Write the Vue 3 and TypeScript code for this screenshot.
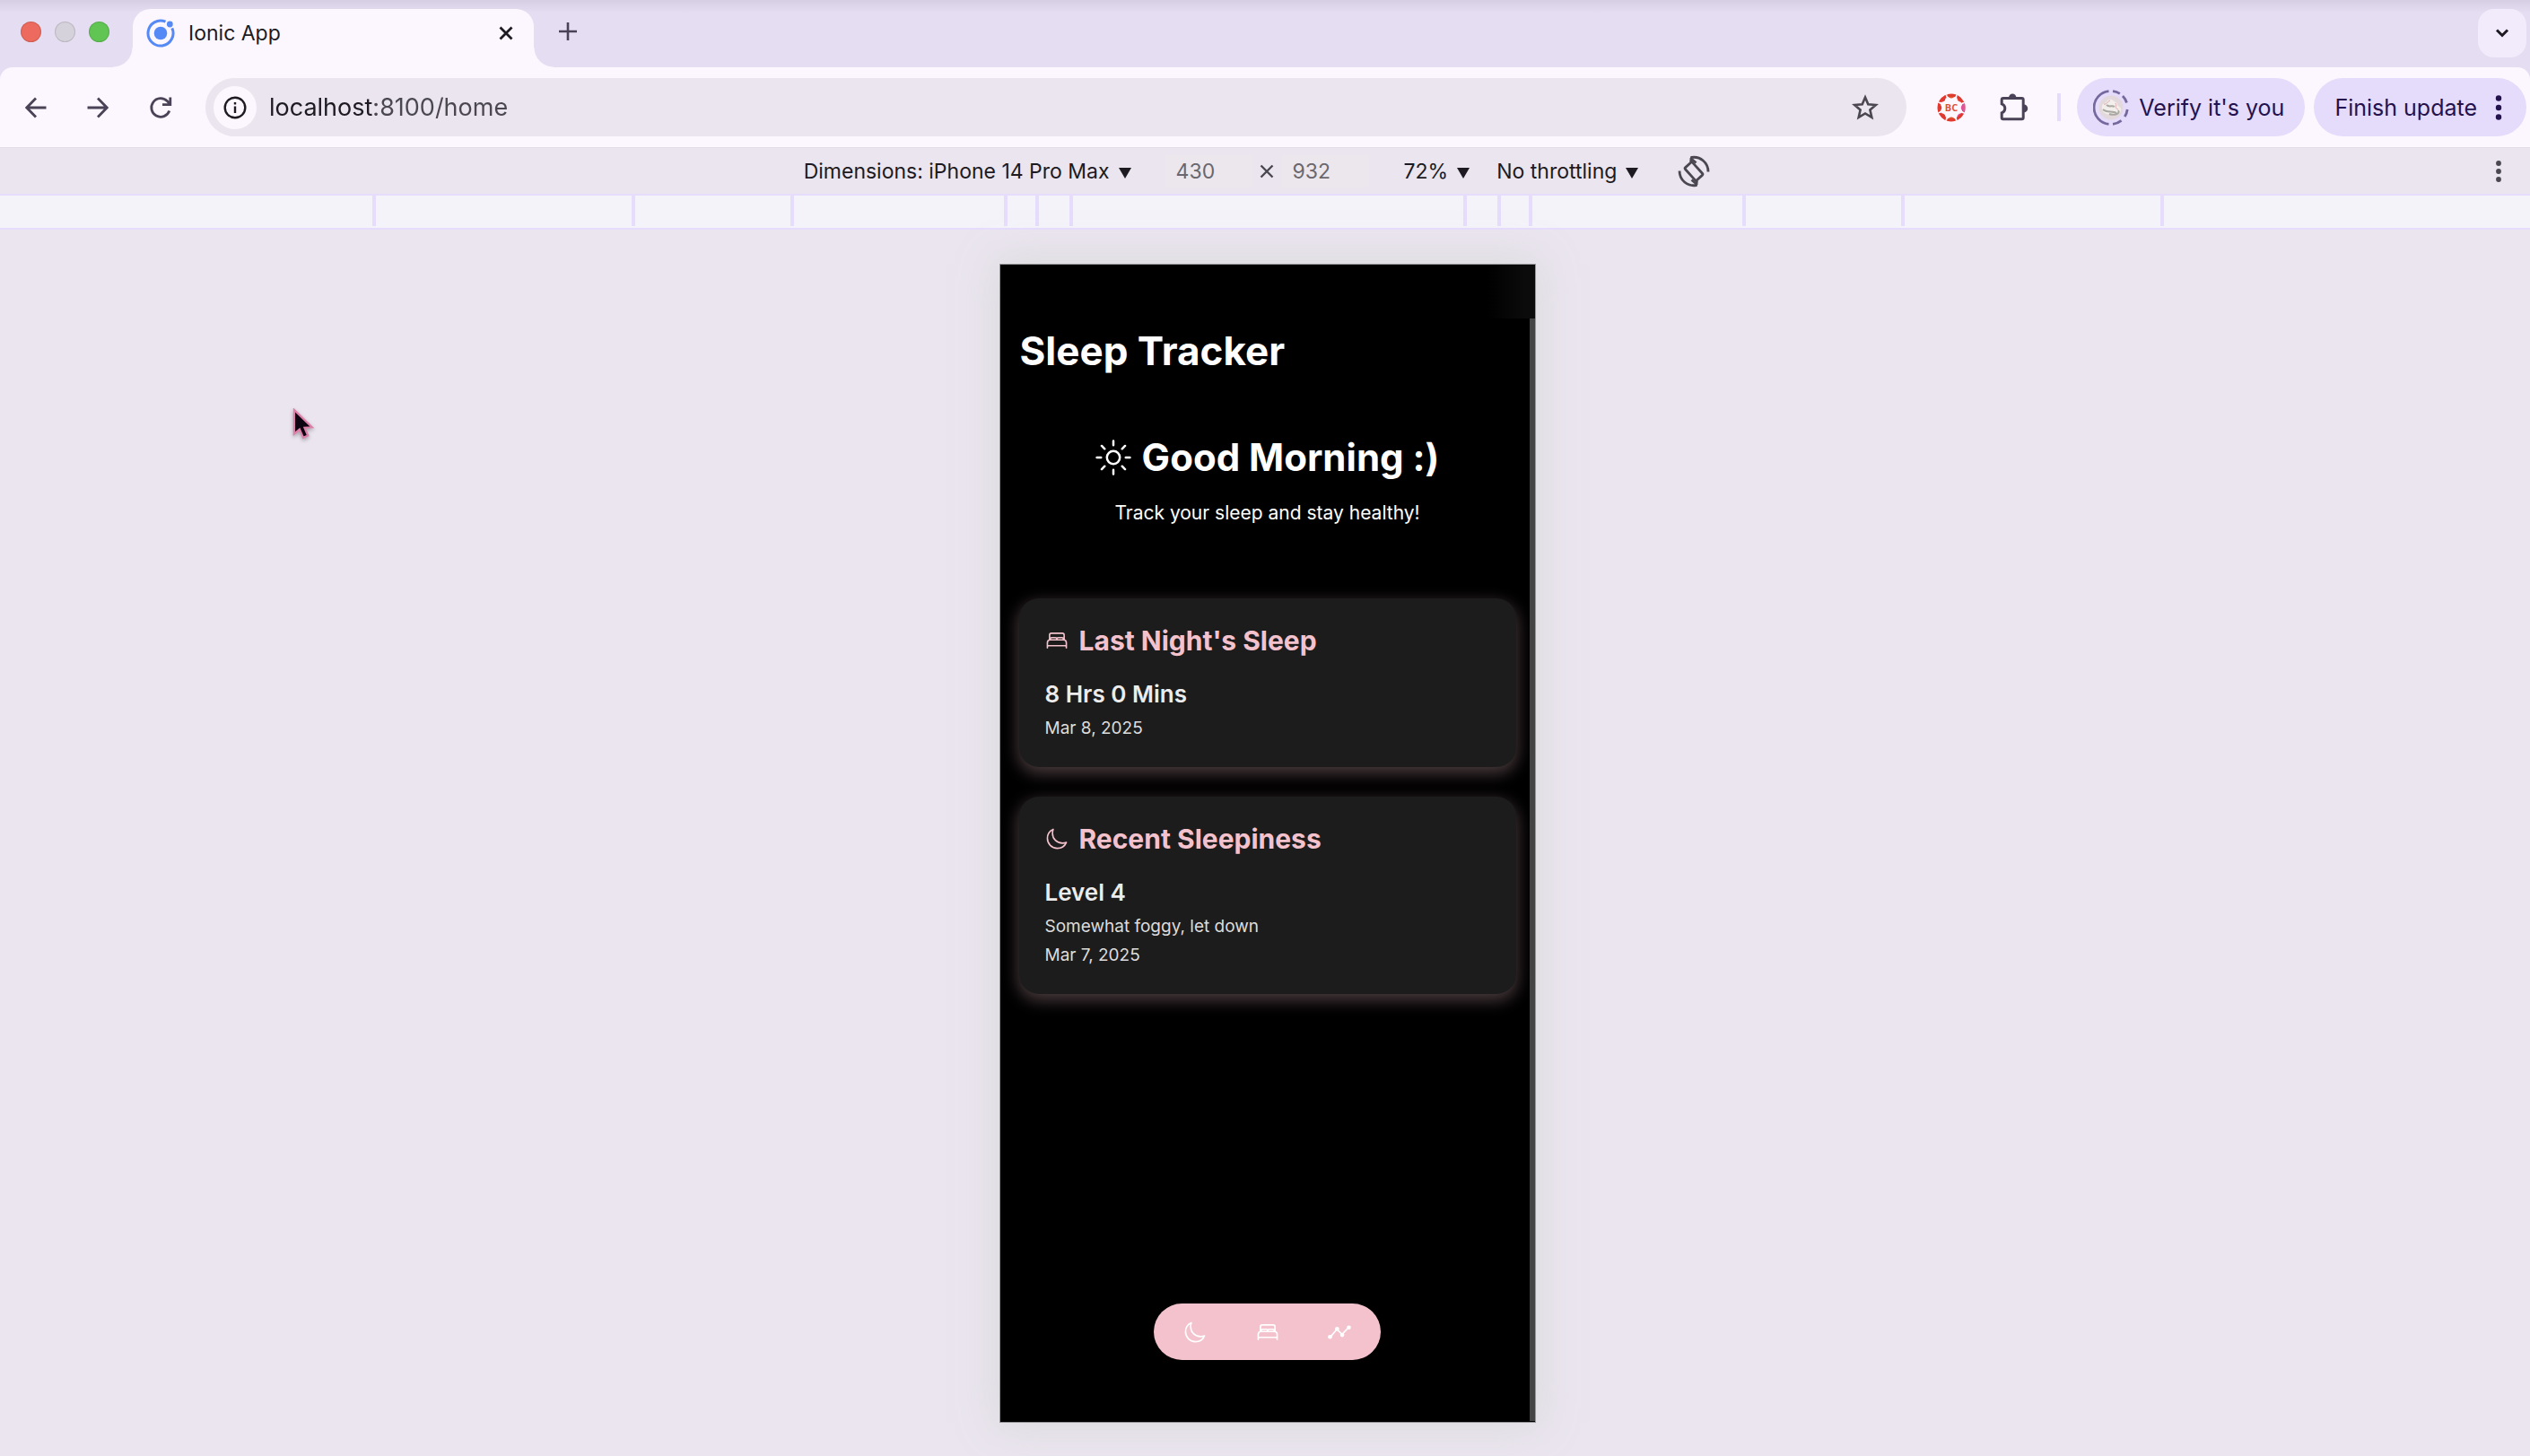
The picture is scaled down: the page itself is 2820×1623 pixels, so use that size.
<script setup lang="ts">
import { ref } from 'vue'

interface SleepCard {
  icon: 'bed' | 'moon'
  title: string
  value: string
  lines: string[]
}

const url = ref('localhost:8100/home')
const viewportWidth = ref('430')
const viewportHeight = ref('932')

const cards: SleepCard[] = [
  { icon: 'bed', title: "Last Night's Sleep", value: '8 Hrs 0 Mins', lines: ['Mar 8, 2025'] },
  { icon: 'moon', title: 'Recent Sleepiness', value: 'Level 4', lines: ['Somewhat foggy, let down', 'Mar 7, 2025'] },
]

// Distances between neighbouring media-query marks on the ruler
const marks: number[] = [289, 177, 238, 35, 38, 439, 38, 35, 238, 177, 289]
</script>

<template>
  <div class="browser">
    <header class="tabstrip">
      <div class="lights">
        <span class="light red"></span>
        <span class="light idle"></span>
        <span class="light green"></span>
      </div>
      <div class="tab">
        <svg class="favicon" viewBox="0 0 32 32" aria-hidden="true">
          <circle cx="16" cy="16" r="7.3" fill="#5589f5" />
          <path d="M21.5 3.2A14 14 0 1 0 28.8 10.4" fill="none" stroke="#5589f5" stroke-width="3" />
          <circle cx="26.3" cy="6" r="3.4" fill="#5589f5" />
        </svg>
        <span class="tab-title">Ionic App</span>
        <button class="plain tab-close" aria-label="Close tab">
          <svg width="16" height="16" viewBox="0 0 16 16"><path d="M1.5 1.5 14.5 14.5M14.5 1.5 1.5 14.5" stroke="#1d1a22" stroke-width="2.8" /></svg>
        </button>
      </div>
      <button class="plain new-tab" aria-label="New tab">
        <svg width="20" height="20" viewBox="0 0 20 20"><path d="M10 0V20M0 10H20" stroke="#4a4358" stroke-width="2.6" /></svg>
      </button>
      <button class="tab-search" aria-label="Search tabs">
        <svg width="16" height="12" viewBox="0 0 16 12"><path d="M2 2.5 8 8.5 14 2.5" fill="none" stroke="#1d1a22" stroke-width="3" /></svg>
      </button>
    </header>

    <nav class="toolbar">
      <button class="plain tool" aria-label="Back">
        <svg width="24" height="24" viewBox="0 0 24 24"><path d="M23.5 12H2.5M12 1.5 1.8 12 12 22.5" fill="none" stroke="#4a4358" stroke-width="2.8" /></svg>
      </button>
      <button class="plain tool" aria-label="Forward">
        <svg width="24" height="24" viewBox="0 0 24 24"><path d="M.5 12H21.5M12 1.5 22.2 12 12 22.5" fill="none" stroke="#4a4358" stroke-width="2.8" /></svg>
      </button>
      <button class="plain tool" aria-label="Reload">
        <svg width="26" height="26" viewBox="0 0 26 26"><path d="M22.8 16.5A10.3 10.3 0 1 1 20.5 5.8L23.5 9M23.8 1.5V9.7H15" fill="none" stroke="#4a4358" stroke-width="2.8" /></svg>
      </button>
      <div class="omnibox">
        <button class="site-info" aria-label="View site information">
          <svg width="26" height="26" viewBox="0 0 26 26"><circle cx="13" cy="13" r="11.3" fill="none" stroke="#1d1a22" stroke-width="2.4" /><path d="M13 11.5V19M13 7V9.5" stroke="#1d1a22" stroke-width="2.4" /></svg>
        </button>
        <input v-model="url" class="address" type="text" aria-label="Address" spellcheck="false" />
        <button class="plain" aria-label="Bookmark this tab">
          <svg width="30" height="30" viewBox="0 0 30 30"><path d="M15 3.5 18.3 11.3 26.8 12 20.4 17.5 22.3 25.8 15 21.4 7.7 25.8 9.6 17.5 3.2 12 11.7 11.3Z" fill="none" stroke="#4a4750" stroke-width="2.6" /></svg>
        </button>
      </div>
      <button class="plain extension" aria-label="BC extension">
        <svg width="32" height="32" viewBox="0 0 32 32">
          <g fill="#e0392f">
            <path d="M10.5 1.4H21.5Q16 9.5 10.5 1.4Z" fill="#e0562a" />
            <path d="M22.5 1.8 30.2 9.5Q20.8 11.2 22.5 1.8Z" fill="#e4473f" />
            <path d="M30.8 10.5V21.5Q22.7 16 30.8 10.5Z" fill="#e0559e" />
            <path d="M30.2 22.5 22.5 30.2Q20.8 20.8 30.2 22.5Z" fill="#e0508a" />
            <path d="M21.5 30.6H10.5Q16 22.5 21.5 30.6Z" fill="#e0562a" />
            <path d="M9.5 30.2 1.8 22.5Q11.2 20.8 9.5 30.2Z" />
            <path d="M1.2 21.5V10.5Q9.3 16 1.2 21.5Z" />
            <path d="M1.8 9.5 9.5 1.8Q11.2 11.2 1.8 9.5Z" />
          </g>
          <circle cx="16" cy="16" r="14" fill="none" stroke="#e0392f" stroke-width="3" stroke-dasharray="8.6 2.4" stroke-dashoffset="4.3" />
          <path d="M29.8 12V20" stroke="#e0559e" stroke-width="3" />
          <text x="16" y="20" text-anchor="middle" font-family="Open Sans, sans-serif" font-size="11" font-weight="700" fill="#dd5240">BC</text>
        </svg>
      </button>
      <button class="plain extension" aria-label="Extensions">
        <svg width="32" height="32" viewBox="0 0 32 32">
          <path d="M3.8 5.5H24.5Q26.2 5.5 26.2 7.2V27Q26.2 28.7 24.5 28.7H3.8Q2.2 28.7 2.2 27V21.8C7 20 7 13.5 2.2 11.8V7.2Q2.2 5.5 3.8 5.5Z" fill="none" stroke="#4a4358" stroke-width="3" />
          <path d="M10 5A4.2 4.5 0 0 1 18.4 5ZM27 12.5A4.2 4.4 0 0 1 27 21.3Z" fill="#4a4358" />
        </svg>
      </button>
      <span class="divider"></span>
      <button class="pill profile">
        <svg width="40" height="40" viewBox="0 0 40 40" aria-hidden="true">
          <path d="M17.5 1.7A18.4 18.4 0 0 0 17.5 38.3" fill="none" stroke="#75689c" stroke-width="2.8" />
          <path d="M22 1.7A18.4 18.4 0 0 1 29.8 4.4M33 7A18.4 18.4 0 0 1 37.5 14.5M38.2 22A18.4 18.4 0 0 1 35.3 30M31.5 34.3A18.4 18.4 0 0 1 22 38.3" fill="none" stroke="#75689c" stroke-width="2.8" />
          <circle cx="20" cy="20" r="13.5" fill="#e3d8dc" />
          <path d="M10 20C9 14 15 16 16 12C21 8 24 14 27 15C26 19 31 18 31 22C31 28 25 28 21 28C16 28 9 26 10 20Z" fill="#f1eeeb" />
          <path d="M11 22C15 26 22 23 26 26M15 17C18 20 21 17 24 19M28 23C31 27 23 29 18 27" fill="none" stroke="#aaa8a2" stroke-width="2" />
          <path d="M12 16C15 17 16 13 19 12M25 15C27 19 23 20 28 22" fill="none" stroke="#deaaa9" stroke-width="1" />
        </svg>
        <span>Verify it's you</span>
      </button>
      <button class="pill update">
        <span>Finish update</span>
        <svg width="8" height="30" viewBox="0 0 8 30" aria-hidden="true" fill="#24124f"><circle cx="4" cy="4.5" r="3.2" /><circle cx="4" cy="15" r="3.2" /><circle cx="4" cy="25.5" r="3.2" /></svg>
      </button>
    </nav>

    <div class="device-bar">
      <div class="device-controls">
        <label class="picker">
          <select aria-label="Device"><option>Dimensions: iPhone 14 Pro Max</option></select>
          <svg class="caret" viewBox="0 0 14 12"><path d="M0 0H14L7 12Z" /></svg>
        </label>
        <div class="size">
          <input v-model="viewportWidth" type="text" aria-label="Width" />
          <svg width="16" height="16" viewBox="0 0 16 16" aria-hidden="true"><path d="M1.5 1.5 14.5 14.5M14.5 1.5 1.5 14.5" stroke="#4a4750" stroke-width="2.4" /></svg>
          <input v-model="viewportHeight" type="text" aria-label="Height" />
        </div>
        <label class="picker">
          <select aria-label="Zoom"><option>72%</option></select>
          <svg class="caret" viewBox="0 0 14 12"><path d="M0 0H14L7 12Z" /></svg>
        </label>
        <label class="picker">
          <select aria-label="Throttling"><option>No throttling</option></select>
          <svg class="caret" viewBox="0 0 14 12"><path d="M0 0H14L7 12Z" /></svg>
        </label>
        <button class="plain rotate" aria-label="Rotate">
          <svg width="36" height="36" viewBox="0 0 36 36" fill="none" stroke="#4a4750" stroke-width="2.8">
            <rect x="12.5" y="8.5" width="11" height="19" rx="1.5" transform="rotate(-42 18 18)" />
            <path d="M14.5 7.5 15.5 2.5C25 1 34 8 34 18.5M14 3 20.5 8.5" />
            <path d="M21.5 28.5 20.5 33.5C11 35 2 28 2 17.5M22 33 15.5 27.5" />
          </svg>
        </button>
      </div>
      <button class="plain more" aria-label="More options">
        <svg width="8" height="26" viewBox="0 0 8 26" fill="#4a4750"><circle cx="4" cy="4" r="2.9" /><circle cx="4" cy="13" r="2.9" /><circle cx="4" cy="22" r="2.9" /></svg>
      </button>
    </div>

    <div class="ruler">
      <span v-for="(w, i) in marks" :key="i" class="mark" :style="{ width: w + 'px' }"></span>
      <span class="mark"></span>
    </div>

    <main class="stage">
      <svg class="cursor" viewBox="0 0 30 40" aria-hidden="true">
        <path d="M3 2V31L9.5 25.5 14 35.5 19.5 33 15.5 23.5 24.5 23Z" fill="#0d0512" stroke="#dd7fa8" stroke-width="2.4" />
      </svg>
      <section class="phone">
        <div class="app-bar"></div>
        <h1>Sleep Tracker</h1>
        <div class="hero">
          <h2>
            <svg width="40" height="40" viewBox="0 0 512 512" fill="none" stroke="currentColor" stroke-width="32" stroke-linecap="round" aria-hidden="true">
              <path d="M256 20V80M256 432V492M423 89 380.5 131.5M131.5 380.5 89 423M492 256H432M80 256H20M423 423 380.5 380.5M131.5 131.5 89 89" />
              <circle cx="256" cy="256" r="92" />
            </svg>
            <span>Good Morning :)</span>
          </h2>
          <p>Track your sleep and stay healthy!</p>
        </div>
        <div class="cards">
          <article v-for="card in cards" :key="card.title" class="card">
            <h3>
              <svg v-if="card.icon === 'bed'" class="glyph" viewBox="0 0 512 512" aria-hidden="true">
                <path d="M384 240H96V136a40.12 40.12 0 0140-40h240a40.12 40.12 0 0140 40v104zM48 416V304a64.19 64.19 0 0164-64h288a64.19 64.19 0 0164 64v112M48 416v-24a24.07 24.07 0 0124-24h368a24.07 24.07 0 0124 24v24M112 240v-16a32.09 32.09 0 0132-32h80a32.09 32.09 0 0132 32v16M256 240v-16a32.09 32.09 0 0132-32h80a32.09 32.09 0 0132 32v16" />
              </svg>
              <svg v-else class="glyph" viewBox="0 0 512 512" aria-hidden="true">
                <path d="M160 136c0-30.62 4.51-61.61 16-88C99.57 81.27 48 159.32 48 248c0 119.29 96.71 216 216 216 88.68 0 166.73-51.57 200-128-26.39 11.49-57.38 16-88 16-119.29 0-216-96.71-216-216z" />
              </svg>
              <span>{{ card.title }}</span>
            </h3>
            <p class="value">{{ card.value }}</p>
            <p v-for="line in card.lines" :key="line" class="line">{{ line }}</p>
          </article>
        </div>
        <nav class="dock">
          <button class="plain" aria-label="Sleepiness">
            <svg class="glyph" viewBox="0 0 512 512"><path d="M160 136c0-30.62 4.51-61.61 16-88C99.57 81.27 48 159.32 48 248c0 119.29 96.71 216 216 216 88.68 0 166.73-51.57 200-128-26.39 11.49-57.38 16-88 16-119.29 0-216-96.71-216-216z" /></svg>
          </button>
          <button class="plain" aria-label="Sleep">
            <svg class="glyph" viewBox="0 0 512 512"><path d="M384 240H96V136a40.12 40.12 0 0140-40h240a40.12 40.12 0 0140 40v104zM48 416V304a64.19 64.19 0 0164-64h288a64.19 64.19 0 0164 64v112M48 416v-24a24.07 24.07 0 0124-24h368a24.07 24.07 0 0124 24v24M112 240v-16a32.09 32.09 0 0132-32h80a32.09 32.09 0 0132 32v16M256 240v-16a32.09 32.09 0 0132-32h80a32.09 32.09 0 0132 32v16" /></svg>
          </button>
          <button class="plain" aria-label="Trends">
            <svg class="glyph" viewBox="0 0 512 512">
              <path d="M64 352 200 192 312 304 448 160" />
              <g fill="currentColor" stroke="none"><circle cx="48" cy="360" r="46" /><circle cx="204" cy="184" r="46" /><circle cx="316" cy="316" r="46" /><circle cx="462" cy="152" r="46" /></g>
            </svg>
          </button>
        </nav>
        <span class="scrollbar"></span>
      </section>
    </main>
  </div>
</template>

<style>
body {
  margin: 0;
  background: #eae5ef;
}
</style>

<style scoped>
* {
  box-sizing: border-box;
}

.browser {
  display: flex;
  flex-direction: column;
  min-height: 100vh;
  overflow: hidden;
  background: #e5def2;
  font-family: Inter, "Liberation Sans", sans-serif;
  color: #1d1a22;
}

button,
input,
select {
  font: inherit;
  color: inherit;
  border: 0;
  padding: 0;
  margin: 0;
  background: none;
}

svg {
  display: block;
}

.plain {
  display: grid;
  place-items: center;
  flex: none;
}

/* Tab strip */
.tabstrip {
  display: flex;
  align-items: flex-start;
  height: 75px;
  padding: 10px 4px 0 23px;
  background: linear-gradient(#d6cfe3, #e5def2 14px);
}

.lights {
  display: flex;
  gap: 15px;
  margin: 14px 26px 0 0;
}

.light {
  width: 23px;
  height: 23px;
  border-radius: 50%;
  border: 1px solid rgba(0, 0, 0, 0.12);
}

.red {
  background: #ed6a5e;
}

.idle {
  background: #d6d2dc;
}

.green {
  background: #61c554;
}

.tab {
  position: relative;
  display: flex;
  align-items: center;
  width: 447px;
  height: 65px;
  padding: 0 23px 12px 15px;
  background: #fcf7fe;
  border-radius: 20px 20px 0 0;
}

.tab::before,
.tab::after {
  content: "";
  position: absolute;
  bottom: 0;
  width: 22px;
  height: 22px;
}

.tab::before {
  right: 100%;
  background: radial-gradient(circle at 0 0, transparent 21px, #fcf7fe 22px);
}

.tab::after {
  left: 100%;
  background: radial-gradient(circle at 100% 0, transparent 21px, #fcf7fe 22px);
}

.favicon {
  width: 32px;
  height: 32px;
  margin-right: 15px;
}

.tab-title {
  flex: 1;
  font-size: 23px;
  line-height: 28px;
}

.new-tab {
  margin: 15px auto 0 28px;
}

.tab-search {
  display: grid;
  place-items: center;
  width: 54px;
  height: 54px;
  border-radius: 18px;
  background: #f2ebfb;
}

/* Address row */
.toolbar {
  display: flex;
  align-items: center;
  height: 89px;
  padding: 0 4px 0 28px;
  background: #fcf7fe;
  border-radius: 14px 14px 0 0;
  font-size: 27px;
}

.tool {
  width: 24px;
  margin-right: 45px;
}

.omnibox {
  display: flex;
  align-items: center;
  flex: 1;
  height: 65px;
  margin-right: 34px;
  padding: 0 31px 0 9px;
  border-radius: 33px;
  background: #eae5ee;
}

.tool + .omnibox {
  margin-left: -6px;
}

.site-info {
  display: grid;
  place-items: center;
  width: 48px;
  height: 48px;
  margin-right: 14px;
  border-radius: 50%;
  background: #fcf7fe;
}

.address {
  flex: 1;
  min-width: 0;
  height: 48px;
  outline: none;
  color: transparent;
  caret-color: #1d1a22;
  background: linear-gradient(90deg, #1d1a22 118px, #4a4750 118px);
  background-clip: text;
}

.extension {
  margin-right: 38px;
}

.divider {
  width: 4px;
  height: 31px;
  margin: 0 18px 0 -6px;
  background: #e5dbfb;
}

.pill {
  display: flex;
  align-items: center;
  flex: none;
  height: 65px;
  border-radius: 33px;
  background: #e5dbfb;
  color: #24124f;
  font-size: 25px;
}

.profile {
  gap: 11px;
  margin-right: 10px;
  padding: 0 23px 0 18px;
}

.update {
  gap: 20px;
  padding: 0 27px 0 23px;
}

/* Device toolbar */
.device-bar {
  display: flex;
  align-items: center;
  height: 52px;
  padding-right: 31px;
  border-top: 1px solid #e2dde6;
  background: #eae5ee;
  font-size: 23px;
}

.device-controls {
  display: flex;
  align-items: center;
  justify-content: center;
  flex: 1;
  padding-left: 21px;
}

.picker {
  display: flex;
  align-items: center;
  gap: 10px;
  margin-right: 30px;
}

.picker select {
  appearance: none;
  field-sizing: content;
}

.caret {
  width: 14px;
  height: 12px;
  margin-top: 4px;
  fill: #1d1a22;
}

.size {
  display: flex;
  align-items: center;
  gap: 9px;
  margin: 0 40px 0 8px;
}

.size input {
  width: 96px;
  height: 36px;
  padding: 0 12px;
  color: #6a676e;
  background: #ebe7ed;
}

.rotate {
  margin-left: 14px;
}

/* Media-query ruler */
.ruler {
  display: flex;
  justify-content: center;
  height: 40px;
  padding: 0 0 2px 6px;
  border-top: 2px solid #e6dcfb;
  border-bottom: 2px solid #e6dcfb;
  background: #f5f3fa;
}

.mark {
  flex: none;
  border-left: 4px solid #e6dcfb;
}

/* Emulated device */
.stage {
  position: relative;
  display: flex;
  justify-content: center;
  flex: 1;
  padding: 38px 0 37px 5px;
  background: #eae5ef;
}

.cursor {
  position: absolute;
  left: 325px;
  top: 199px;
  width: 28px;
  height: 37px;
  filter: drop-shadow(0 2px 2px rgba(0, 0, 0, 0.3));
}

.phone {
  position: relative;
  display: flex;
  flex-direction: column;
  width: 598px;
  border: 1px solid #98979c;
  background: #000;
  color: #fff;
  box-shadow: 0 0 40px rgba(200, 205, 195, 0.5);
}

.app-bar {
  height: 60px;
  background: linear-gradient(90deg, #000 91%, #0b0b0b 98%);
}

h1,
h2,
h3,
p {
  margin: 0;
}

h1 {
  padding: 8px 22px 0;
  font-size: 44px;
  line-height: 56px;
}

.hero {
  padding-top: 65px;
  text-align: center;
}

h2 {
  display: flex;
  align-items: center;
  justify-content: center;
  gap: 12px;
  font-size: 42px;
  line-height: 52px;
}

.hero p {
  margin-top: 22px;
  font-size: 21px;
  line-height: 28px;
}

.cards {
  display: flex;
  flex-direction: column;
  gap: 33px;
  padding: 81px 21px 0;
}

.card {
  padding: 29px 29px 27px;
  border-radius: 22px;
  background: #1c1c1c;
  box-shadow: 0 6px 18px 1px rgba(246, 195, 205, 0.3);
}

h3 {
  display: flex;
  align-items: center;
  gap: 12px;
  color: #f4c2cc;
  font-size: 30px;
  line-height: 36px;
}

.glyph {
  width: 26px;
  height: 26px;
  fill: none;
  stroke: currentColor;
  stroke-width: 32px;
  stroke-linejoin: round;
  stroke-linecap: round;
}

.value {
  margin: 26px 0 6px;
  color: #ececec;
  font-size: 26px;
  font-weight: 600;
  line-height: 32px;
}

.line {
  color: #dcdcdc;
  font-size: 19px;
  line-height: 32px;
}

.dock {
  display: flex;
  align-items: center;
  justify-content: space-between;
  align-self: center;
  width: 253px;
  height: 63px;
  margin: auto 0 69px;
  padding: 0 33px;
  border-radius: 32px;
  background: #f4c2cc;
}

.scrollbar {
  position: absolute;
  top: 60px;
  right: 0;
  bottom: 1px;
  width: 6px;
  background: #444;
}
</style>
